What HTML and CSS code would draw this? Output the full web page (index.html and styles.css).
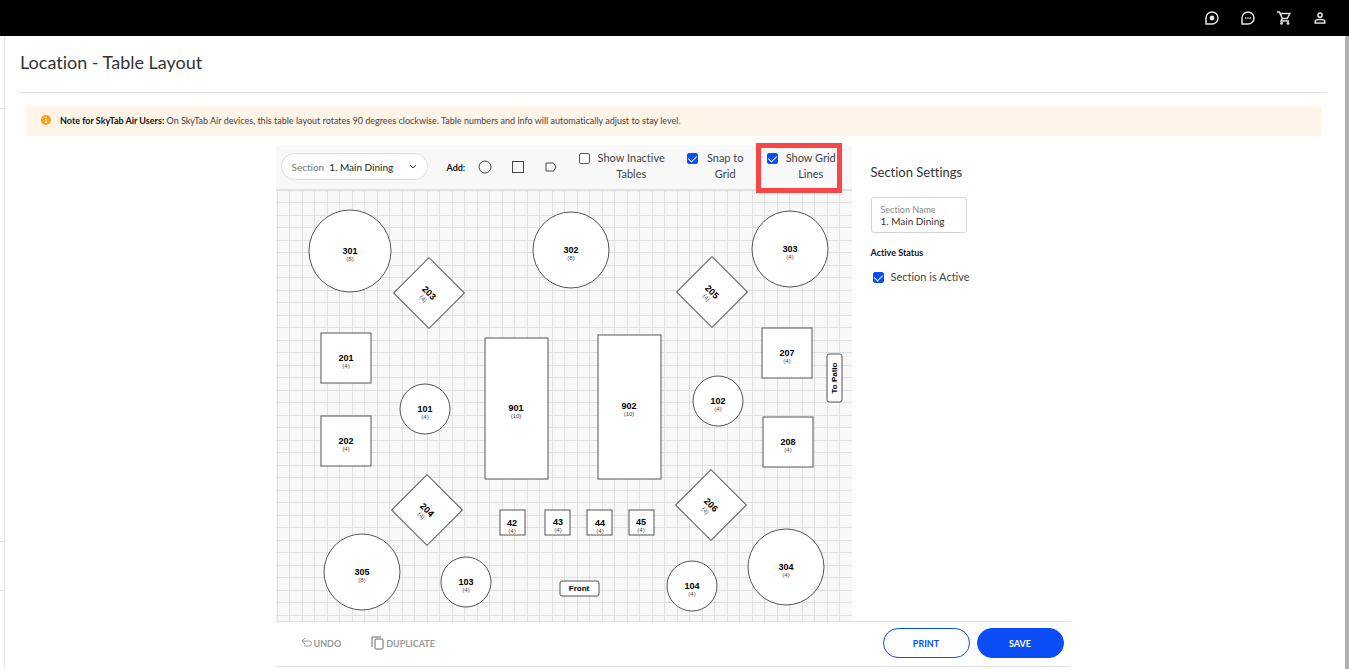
FILE: index.html
```html
<!DOCTYPE html>
<html lang="en">
<head>
  <meta charset="UTF-8" />
  <meta name="viewport" content="width=device-width, initial-scale=1.0" />
  <title>Location - Table Layout</title>
  <link rel="stylesheet" href="styles.css">
</head>
<body>
  <header class="topbar">
    <a href="#" aria-label="What's new">
      <svg viewBox="0 0 14 14"><path d="M1 13V7a6 6 0 1 1 6 6z" /><circle class="solid" cx="7" cy="7" r="2.4" /></svg>
    </a>
    <a href="#" aria-label="Chat">
      <svg viewBox="0 0 14 14"><path d="M1 13V7a6 6 0 1 1 6 6z" /><path d="M4 7h1.4M6.3 7h1.4M8.6 7H10" /></svg>
    </a>
    <a href="#" aria-label="Cart">
      <svg viewBox="0 0 14 14"><path d="M0 1h2.4l3 6.6h4.8L13 2.4H3.2M5.2 7.8 4 10h8.2" /><circle class="solid" cx="4.6" cy="12.4" r="1.4" /><circle class="solid" cx="11" cy="12.4" r="1.4" /></svg>
    </a>
    <a href="#" aria-label="Account">
      <svg viewBox="0 0 14 14"><circle cx="7" cy="4.2" r="2.1" /><path d="M2.2 12v-1.4C2.2 9.2 5 8.6 7 8.6s4.800.6 4.800 2V12z" /></svg>
    </a>
  </header>

  <div class="page">
    <aside class="rail"><span></span><span></span><span></span></aside>

    <main>
      <h1>Location - Table Layout</h1>

      <div class="notice">
        <svg viewBox="0 0 10 10"><circle cx="5" cy="5" r="5" /><path d="M5 2v1.300M4.200 4.500H5v3M4 7.500h2" /></svg>
        <p><strong>Note for SkyTab Air Users:</strong> On SkyTab Air devices, this table layout rotates 90 degrees clockwise. Table numbers and info will automatically adjust to stay level.</p>
      </div>

      <div class="editor">
        <section class="floor">
          <div class="toolbar">
            <div class="section-picker">
              <label for="section">Section</label>
              <select id="section"><option>1. Main Dining</option></select>
              <svg viewBox="0 0 8 8"><path d="M1 2l3 3 3-3" /></svg>
            </div>
            <div class="add">
              <strong>Add:</strong>
              <button type="button" aria-label="Round table"><svg viewBox="0 0 14 14"><circle cx="7" cy="7" r="6" /></svg></button>
              <button type="button" aria-label="Square table"><svg viewBox="0 0 14 14"><rect x="1.500" y="1.500" width="11" height="11" /></svg></button>
              <button type="button" aria-label="Label"><svg viewBox="0 0 14 14"><path d="M2 3h7.500l2.500 4-2.500 4H2z" /></svg></button>
            </div>
            <label class="check inactive"><input type="checkbox" /><span>Show Inactive Tables</span></label>
            <label class="check snap"><input type="checkbox" checked /><span>Snap to Grid</span></label>
            <label class="check lines"><input type="checkbox" checked /><span>Show Grid Lines</span></label>
          </div>

          <svg class="canvas" viewBox="0 0 576 431">
            <defs>
              <pattern id="grid" x="1" y="0" width="25" height="25" patternUnits="userSpaceOnUse">
                <path d="M0 0h1v25H0zM12 0h1v25h-1zM0 0h25v1H0zM0 12h25v1H0z" />
              </pattern>
            </defs>
            <rect class="grid" width="576" height="431" />

            <!-- round tables -->
            <g transform="translate(74 61)"><circle r="41" /><text y="3">301</text><text class="seats" y="10">(8)</text></g>
            <g transform="translate(295 60)"><circle r="38" /><text y="3">302</text><text class="seats" y="10">(8)</text></g>
            <g transform="translate(514 59)"><circle r="38" /><text y="3">303</text><text class="seats" y="10">(4)</text></g>
            <g transform="translate(149 219)"><circle r="25" /><text y="3">101</text><text class="seats" y="10">(4)</text></g>
            <g transform="translate(442 211)"><circle r="25" /><text y="3">102</text><text class="seats" y="10">(4)</text></g>
            <g transform="translate(86 382)"><circle r="38" /><text y="3">305</text><text class="seats" y="10">(8)</text></g>
            <g transform="translate(190 392)"><circle r="25" /><text y="3">103</text><text class="seats" y="10">(4)</text></g>
            <g transform="translate(416 396)"><circle r="25" /><text y="3">104</text><text class="seats" y="10">(4)</text></g>
            <g transform="translate(510 377)"><circle r="38" /><text y="3">304</text><text class="seats" y="10">(4)</text></g>

            <!-- diamonds -->
            <g transform="translate(153 103) rotate(45)"><rect x="-25" y="-25" width="50" height="50" /><text y="3">203</text><text class="seats" y="10">(4)</text></g>
            <g transform="translate(436 102) rotate(45)"><rect x="-25" y="-25" width="50" height="50" /><text y="3">205</text><text class="seats" y="10">(4)</text></g>
            <g transform="translate(151 320) rotate(45)"><rect x="-25" y="-25" width="50" height="50" /><text y="3">204</text><text class="seats" y="10">(4)</text></g>
            <g transform="translate(435 315) rotate(45)"><rect x="-25" y="-25" width="50" height="50" /><text y="3">206</text><text class="seats" y="10">(4)</text></g>

            <!-- square tables -->
            <g transform="translate(70 168)"><rect x="-25" y="-25" width="50" height="50" /><text y="3">201</text><text class="seats" y="10">(4)</text></g>
            <g transform="translate(70 251)"><rect x="-25" y="-25" width="50" height="50" /><text y="3">202</text><text class="seats" y="10">(4)</text></g>
            <g transform="translate(511 163)"><rect x="-25" y="-25" width="50" height="50" /><text y="3">207</text><text class="seats" y="10">(4)</text></g>
            <g transform="translate(512 252)"><rect x="-25" y="-25" width="50" height="50" /><text y="3">208</text><text class="seats" y="10">(4)</text></g>
            <g transform="translate(240 218)"><rect x="-31" y="-70" width="63" height="141" /><text y="3">901</text><text class="seats" y="10">(10)</text></g>
            <g transform="translate(353 216)"><rect x="-31" y="-71" width="63" height="144" /><text y="3">902</text><text class="seats" y="10">(10)</text></g>
            <g transform="translate(236 333)"><rect x="-12" y="-13" width="25" height="25" /><text y="3">42</text><text class="seats" y="10">(4)</text></g>
            <g transform="translate(282 332)"><rect x="-13" y="-12" width="25" height="25" /><text y="3">43</text><text class="seats" y="10">(4)</text></g>
            <g transform="translate(324 333)"><rect x="-13" y="-13" width="25" height="25" /><text y="3">44</text><text class="seats" y="10">(4)</text></g>
            <g transform="translate(365 332)"><rect x="-12" y="-12" width="25" height="25" /><text y="3">45</text><text class="seats" y="10">(4)</text></g>

            <!-- labels -->
            <g class="sign" transform="translate(303 398)"><rect x="-19" y="-7" width="39" height="15" rx="2" /><text y="3">Front</text></g>
            <g class="sign" transform="translate(558 188) rotate(-90)"><rect x="-24" y="-7" width="48" height="15" rx="2" /><text y="3">To Patio</text></g>
          </svg>
        </section>

        <section class="settings">
          <h2>Section Settings</h2>
          <div class="field">
            <label for="section-name">Section Name</label>
            <input id="section-name" type="text" value="1. Main Dining" />
          </div>
          <h3>Active Status</h3>
          <label class="check"><input type="checkbox" checked /><span>Section is Active</span></label>
        </section>

        <footer class="actions">
          <button type="button" class="plain">
            <svg class="undo" viewBox="0 0 12 12"><path d="M4 1 1 4l3 3M1 4h7a2.500 2.500 0 0 1 0 5H3" /></svg>UNDO
          </button>
          <button type="button" class="plain">
            <svg class="copy" viewBox="0 0 14 14"><path d="M1 11V1h9" /><rect x="4" y="3" width="8" height="10" rx="1" /></svg>DUPLICATE
          </button>
          <button type="button" class="pill print">PRINT</button>
          <button type="button" class="pill save">SAVE</button>
        </footer>
      </div>
    </main>

    <div class="scrollbar"></div>
  </div>
</body>
</html>
```
FILE: styles.css
```css
* { box-sizing: border-box; }
body { font-family: Lato, "Open Sans", sans-serif; font-size: 11px; font-variant-ligatures: none; margin: 0; min-height: 100vh; display: flex; flex-direction: column; background: #fff; color: #333; }
h1, h2, h3, p { margin: 0; font-weight: 400; }
svg { fill: none; stroke: currentColor; display: block; }
button, input, select { font: inherit; color: inherit; margin: 0; padding: 0; border: 0; background: none; }
button { cursor: pointer; }

.topbar { background: #000; height: 36px; display: flex; align-items: center; justify-content: flex-end; gap: 22px; padding: 0 22px; }
.topbar a { color: #e4e4e4; }
.topbar svg { width: 14px; height: 14px; stroke-width: 1.5; }
.topbar .solid { fill: currentColor; stroke: none; }

.page { flex: 1; display: flex; }
.rail { width: 5px; border-right: 1px solid #e6e6e6; display: grid; grid-template-rows: 73px 433px 49px; }
.rail span { border-bottom: 1px solid #e0e0e0; }
.scrollbar { width: 4px; background: #b0b0b0; border-radius: 2px 0 0 0; }
main { flex: 1; padding: 0 18px 0 15px; }

h1 { font-size: 18px; line-height: 24px; padding: 14px 0 18px; border-bottom: 1px solid #e2e2e2; color: #333; }
.notice { display: flex; align-items: center; gap: 9px; margin: 13px 6px 9px; padding: 0 15px 2px; height: 30px; background: #fff4e8; border-radius: 2px; font-size: 9px; color: #444; }
.notice svg { width: 10px; height: 10px; fill: #f99d1c; stroke: none; }
.notice path { stroke: #fff; }
.notice strong { color: #111; }

.editor { max-width: 796px; margin: 0 auto; padding-right: 2px; display: grid; grid-template-columns: 576fr 218fr; }
.toolbar { height: 45px; display: flex; background: #f8f8f8; border-bottom: 1px solid #e0e0e0; padding-left: 5px; }
.section-picker { display: flex; align-items: center; width: 147px; height: 27px; margin-top: 8px; padding: 0 10px; background: #fff; border: 1px solid #ddd; border-radius: 14px; font-size: 10px; }
.section-picker label { color: #777; margin-right: 5px; }
.section-picker select { appearance: none; flex: 1; min-width: 0; color: #222; }
.section-picker svg { width: 8px; height: 8px; }
.add { display: flex; align-items: center; margin-left: 19px; gap: 19px; font-size: 9px; color: #111; }
.add strong { margin-right: -6px; }
.add svg { width: 14px; height: 14px; color: #444; }

.check { display: flex; align-items: flex-start; gap: 7px; line-height: 16px; color: #444; }
.check input { appearance: none; flex: none; width: 11px; height: 11px; margin-top: 3px; border: 1px solid #555; border-radius: 2px; background: #fff; }
.check input:checked { background: #0a4cf5; border-color: #0a4cf5; }
.check input:checked::after { content: ""; display: block; width: 4px; height: 7px; margin: 0 auto; border: solid #fff; border-width: 0 1px 1px 0; transform: rotate(45deg); }
.toolbar .check { padding-top: 5px; text-align: center; }
.inactive { margin-left: 21px; width: 86px; }
.snap { margin-left: 22px; width: 58px; }
.lines { position: relative; margin-left: 22px; width: 69px; }
.lines::after { content: ""; position: absolute; inset: -2px -6px -4px -11px; border: 5px solid #f94545; }

.canvas { width: 100%; height: auto; background: #f8f8f8; }
.canvas pattern path { fill: #e0e0e0; stroke: none; }
.canvas circle, .canvas rect { fill: #fff; stroke: #555; }
.canvas .grid { fill: url(#grid); stroke: none; }
.canvas text { font: bold 9px "Liberation Sans", Arial, sans-serif; fill: #000; stroke: none; text-anchor: middle; }
.canvas .seats { font-size: 6px; font-weight: 400; fill: #444; }
.canvas .sign text { font-size: 8px; }

.settings { padding: 18px 19px 0; }
.settings h2 { font-size: 13px; line-height: 18px; color: #333; }
.field { width: 96px; height: 36px; margin: 16px 0 14px; padding: 6px 9px 0; border: 1px solid #d5d5d5; border-radius: 3px; }
.field label { display: block; font-size: 9px; line-height: 11px; color: #888; }
.field input { display: block; width: 100%; height: 12px; font-size: 10px; }
.settings h3 { font-size: 9px; line-height: 12px; font-weight: 700; color: #111; margin-bottom: 10px; }
.settings .check { padding-left: 2px; }

.actions { grid-column: 1 / -1; display: flex; align-items: center; height: 46px; padding: 0 6px 2px 25px; border: solid #e2e2e2; border-width: 1px 0; }
.actions .plain { display: flex; align-items: center; gap: 1px; margin-right: 30px; font-size: 9px; font-weight: 700; color: #999; }
.undo { width: 12px; height: 12px; }
.copy { width: 14px; height: 14px; color: #666; }
.pill { width: 87px; height: 30px; border: 1px solid #0a4cf5; border-radius: 15px; font-size: 9px; font-weight: 700; }
.print { margin-left: auto; color: #0a4cf5; }
.save { margin-left: 7px; background: #0a4cf5; color: #fff; }
```
